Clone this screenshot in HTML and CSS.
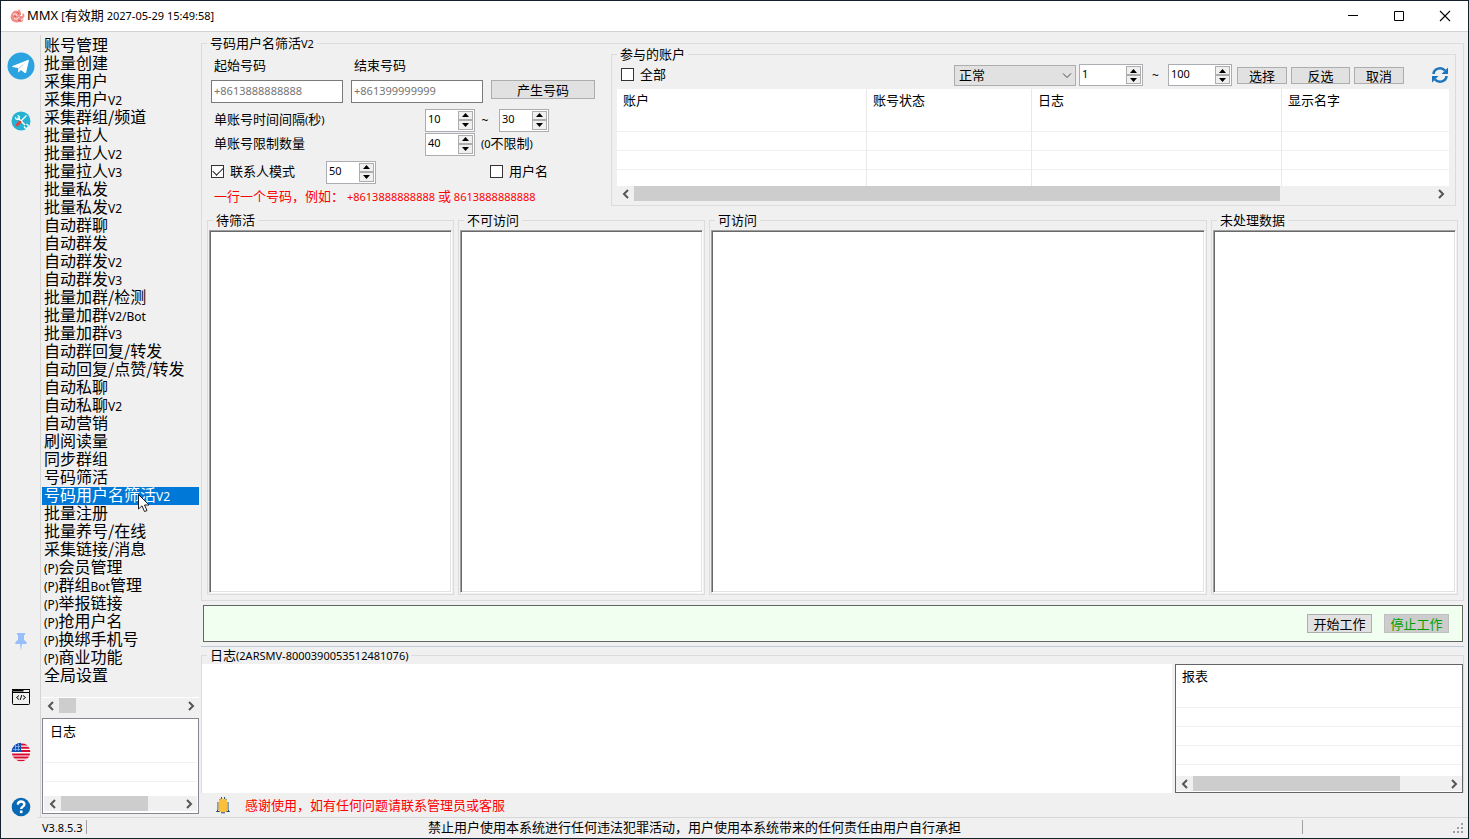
FILE: index.html
```html
<!DOCTYPE html>
<html lang="zh-CN">
<head>
<meta charset="utf-8">
<title>MMX</title>
<link rel="stylesheet" href="styles.css">
</head>
<body>
<div class="window">
  <header class="titlebar">
    <svg class="logo" width="16" height="16" viewBox="0 0 16 16"><path d="M2 5C4 2 6 2 8 3C8 1 10 1 10 3C12 5 11 7 10 8L12 8C13 7 12 6 13 5C15 7 15 9 13 10C14 12 13 14 10 14C6 15 2 14 1 11C0 9 1 7 2 5Z" fill="#f08f8a"/><path d="M3 7C5 5 7 6 7 8M4 10C6 12 8 11 9 9M11 12l2-1M11 4l2-1" fill="none" stroke="#fff" stroke-width="1"/><path d="M4 8L6 9M7 4L9 6M8 12L11 13" stroke="#d8524f" stroke-width="1"/></svg>
    <h1 class="title"><span class="brand">MMX</span> <span class="latin">[</span>有效期 <span class="latin">2027-05-29 15:49:58]</span></h1>
    <div class="winbtns">
      <button class="winbtn" aria-label="最小化"><svg width="12" height="12"><path d="M1 5.500h10" stroke="#000"/></svg></button>
      <button class="winbtn" aria-label="最大化"><svg width="12" height="12"><path d="M1.500 1.500h9v9h-9z" fill="none" stroke="#000"/></svg></button>
      <button class="winbtn" aria-label="关闭"><svg width="12" height="12"><path d="M1 1L11 11M11 1L1 11" stroke="#000" stroke-width="1.100"/></svg></button>
    </div>
  </header>

  <div class="app">
    <nav class="rail" aria-label="工具">
      <button class="railbtn" aria-label="Telegram"><svg width="28" height="28" viewBox="0 0 28 28"><circle cx="14" cy="14" r="13.500" fill="#2ba3e0"/><path d="M5.500 14L20.800 7.900C21.500 7.700 22 8.100 21.800 9L19.200 20.300C19 21.100 18.500 21.300 17.800 20.900L13.900 18L12 19.900C11.600 20.300 11.100 20.200 11.100 19.500V16L5.600 14.900C5 14.700 5 14.200 5.500 14Z" fill="#fff"/><path d="M11.100 16L18.500 10.600L12.500 16.800L12 19.900Z" fill="#c8daea"/></svg></button>
      <button class="railbtn" aria-label="工具箱"><svg width="20" height="20" viewBox="0 0 20 20"><circle cx="10" cy="10" r="9.500" fill="#25b2d2"/><path d="M6.500 6.500L14 14" stroke="#fff" stroke-width="1.600"/><path d="M4.500 6A2 2 0 1 0 6.500 4.500M13.300 15.300A2 2 0 1 0 15.300 13.300" fill="none" stroke="#fff" stroke-width="1.200"/><path d="M15.500 4.500L10 10" stroke="#fff" stroke-width="1.200"/><path d="M9 11L6 14" stroke="#e4413c" stroke-width="2.800" stroke-linecap="round"/></svg></button>
      <span class="spring"></span>
      <button class="railbtn" aria-label="固定"><svg width="14" height="20" viewBox="0 0 14 20"><path d="M3 1H11V3H10V8C12 9 12.800 10 12.800 12H8L7 19L6 12H1.200C1.200 10 2 9 4 8V3H3Z" fill="#99bffb"/></svg></button>
      <button class="railbtn" aria-label="代码"><svg width="20" height="18" viewBox="0 0 20 18"><rect x="1.500" y="1.500" width="17" height="15" rx="1" fill="none" stroke="#000"/><path d="M1 1.500H19M1 4.500H19" stroke="#000"/><path d="M2 2.500H12.500" stroke="#000" stroke-width="2"/><path d="M8 7.500L5.500 9.500L8 11.500M12 7.500L14.500 9.500L12 11.500M10.800 7L9.200 12" fill="none" stroke="#000"/></svg></button>
      <button class="railbtn" aria-label="语言"><svg width="20" height="20" viewBox="0 0 20 20"><clipPath id="round"><circle cx="10" cy="10" r="9.300"/></clipPath><g clip-path="url(#round)"><path d="M0 0H20V20H0Z" fill="#fff"/><path d="M0 2.500H20M0 5.800H20M0 9H20M0 12.500H20M0 15.500H20M0 18.800H20" stroke="#d80b2e" stroke-width="2"/><path d="M0 0H10V10H0Z" fill="#0d52b5"/><path d="M2 7.500h7M4 4.500h5M4.500 3v6M7.500 2v7" stroke="#9fc0ea" stroke-width=".7"/></g></svg></button>
      <button class="railbtn" aria-label="帮助"><svg width="20" height="20" viewBox="0 0 20 20"><circle cx="10" cy="10" r="9.300" fill="#0768b3"/><path d="M6.800 7.600C7 5.400 8.300 4.500 10.100 4.500C12 4.500 13.400 5.500 13.400 7.200C13.400 9.600 10.200 9.600 10.200 12" fill="none" stroke="#fff" stroke-width="2.400"/><rect x="8.900" y="13.500" width="2.600" height="2.600" fill="#fff"/></svg></button>
    </nav>

    <aside class="side">
      <ul class="menu">
        <li><a href="#">账号管理</a></li>
        <li><a href="#">批量创建</a></li>
        <li><a href="#">采集用户</a></li>
        <li><a href="#">采集用户<small>V2</small></a></li>
        <li><a href="#">采集群组/频道</a></li>
        <li><a href="#">批量拉人</a></li>
        <li><a href="#">批量拉人<small>V2</small></a></li>
        <li><a href="#">批量拉人<small>V3</small></a></li>
        <li><a href="#">批量私发</a></li>
        <li><a href="#">批量私发<small>V2</small></a></li>
        <li><a href="#">自动群聊</a></li>
        <li><a href="#">自动群发</a></li>
        <li><a href="#">自动群发<small>V2</small></a></li>
        <li><a href="#">自动群发<small>V3</small></a></li>
        <li><a href="#">批量加群/检测</a></li>
        <li><a href="#">批量加群<small>V2/Bot</small></a></li>
        <li><a href="#">批量加群<small>V3</small></a></li>
        <li><a href="#">自动群回复/转发</a></li>
        <li><a href="#">自动回复/点赞/转发</a></li>
        <li><a href="#">自动私聊</a></li>
        <li><a href="#">自动私聊<small>V2</small></a></li>
        <li><a href="#">自动营销</a></li>
        <li><a href="#">刷阅读量</a></li>
        <li><a href="#">同步群组</a></li>
        <li><a href="#">号码筛活</a></li>
        <li class="current"><a href="#" aria-current="page">号码用户名筛活<small>V2</small></a><svg class="pointer" width="14" height="21" viewBox="0 0 14 21"><path d="M1.500 1.500V16L5 12.800L7.500 18.600L10 17.500L7.500 12H12Z" fill="#fff" stroke="#1b1b2a"/></svg></li>
        <li><a href="#">批量注册</a></li>
        <li><a href="#">批量养号/在线</a></li>
        <li><a href="#">采集链接/消息</a></li>
        <li><a href="#"><small>(P)</small>会员管理</a></li>
        <li><a href="#"><small>(P)</small>群组<small>Bot</small>管理</a></li>
        <li><a href="#"><small>(P)</small>举报链接</a></li>
        <li><a href="#"><small>(P)</small>抢用户名</a></li>
        <li><a href="#"><small>(P)</small>换绑手机号</a></li>
        <li><a href="#"><small>(P)</small>商业功能</a></li>
        <li><a href="#">全局设置</a></li>
      </ul>
      <div class="scroll menuscroll">
        <button aria-label="向左"><svg width="8" height="10"><path d="M6 1L2 5L6 9"/></svg></button>
        <div class="track"><div class="thumb" style="width:14%"></div></div>
        <button aria-label="向右"><svg width="8" height="10"><path d="M2 1L6 5L2 9"/></svg></button>
      </div>
      <div class="listview sidelog">
        <table>
          <thead><tr><th>日志</th></tr></thead>
          <tbody><tr><td></td></tr><tr><td></td></tr></tbody>
        </table>
        <div class="scroll">
          <button aria-label="向左"><svg width="8" height="10"><path d="M6 1L2 5L6 9"/></svg></button>
          <div class="track"><div class="thumb" style="width:73%"></div></div>
          <button aria-label="向右"><svg width="8" height="10"><path d="M2 1L6 5L2 9"/></svg></button>
        </div>
      </div>
    </aside>

    <main class="main">
      <fieldset class="group outer">
        <legend>号码用户名筛活<span class="latin">V2</span></legend>
        <div class="top">
          <form class="settings">
            <div class="numbers">
              <label for="from">起始号码</label>
              <label for="to">结束号码</label>
              <span></span>
              <input class="text" id="from" type="text" placeholder="+8613888888888">
              <input class="text" id="to" type="text" placeholder="+861399999999">
              <button class="btn" type="button">产生号码</button>
            </div>
            <div class="line">
              <label class="wide" for="gapmin">单账号时间间隔<span class="latin">(</span>秒<span class="latin">)</span></label>
              <span class="spin"><input id="gapmin" type="text" value="10"><span class="steps"><button type="button" aria-label="增加"><svg width="7" height="4"><path d="M0 4L3.500 0L7 4Z"/></svg></button><button type="button" aria-label="减少"><svg width="7" height="4"><path d="M0 0L3.500 4L7 0Z"/></svg></button></span></span>
              <span class="tilde">~</span>
              <span class="spin"><input aria-label="最大间隔" type="text" value="30"><span class="steps"><button type="button" aria-label="增加"><svg width="7" height="4"><path d="M0 4L3.500 0L7 4Z"/></svg></button><button type="button" aria-label="减少"><svg width="7" height="4"><path d="M0 0L3.500 4L7 0Z"/></svg></button></span></span>
            </div>
            <div class="line">
              <label class="wide" for="limit">单账号限制数量</label>
              <span class="spin"><input id="limit" type="text" value="40"><span class="steps"><button type="button" aria-label="增加"><svg width="7" height="4"><path d="M0 4L3.500 0L7 4Z"/></svg></button><button type="button" aria-label="减少"><svg width="7" height="4"><path d="M0 0L3.500 4L7 0Z"/></svg></button></span></span>
              <span class="hint"><span class="latin">(0</span>不限制<span class="latin">)</span></span>
            </div>
            <div class="line modes">
              <label class="check contact"><input type="checkbox" checked>联系人模式</label>
              <span class="spin"><input aria-label="联系人数量" type="text" value="50"><span class="steps"><button type="button" aria-label="增加"><svg width="7" height="4"><path d="M0 4L3.500 0L7 4Z"/></svg></button><button type="button" aria-label="减少"><svg width="7" height="4"><path d="M0 0L3.500 4L7 0Z"/></svg></button></span></span>
              <label class="check username"><input type="checkbox">用户名</label>
            </div>
            <p class="note">一行一个号码，例如： <span class="latin">+8613888888888</span> 或 <span class="latin">8613888888888</span></p>
          </form>

          <fieldset class="group accounts">
            <legend>参与的账户</legend>
            <div class="tools">
              <label class="check all"><input type="checkbox">全部</label>
              <span class="pick"><select aria-label="状态"><option>正常</option></select><svg width="10" height="6"><path d="M1 .5L5 4.500L9 .5" fill="none" stroke="#444"/></svg></span>
              <span class="spin big"><input aria-label="起始" type="text" value="1"><span class="steps"><button type="button" aria-label="增加"><svg width="7" height="4"><path d="M0 4L3.500 0L7 4Z"/></svg></button><button type="button" aria-label="减少"><svg width="7" height="4"><path d="M0 0L3.500 4L7 0Z"/></svg></button></span></span>
              <span class="tilde range">~</span>
              <span class="spin big"><input aria-label="结束" type="text" value="100"><span class="steps"><button type="button" aria-label="增加"><svg width="7" height="4"><path d="M0 4L3.500 0L7 4Z"/></svg></button><button type="button" aria-label="减少"><svg width="7" height="4"><path d="M0 0L3.500 4L7 0Z"/></svg></button></span></span>
              <span class="actions"><button class="btn small" type="button">选择</button><button class="btn medium" type="button">反选</button><button class="btn small" type="button">取消</button></span>
              <button class="refresh" type="button" aria-label="刷新"><svg width="18" height="18" viewBox="0 0 18 18"><path d="M2.500 8A6.500 6 0 0 1 14 4.500M15.500 10A6.500 6 0 0 1 4 13.500" fill="none" stroke="#1c75bc" stroke-width="2.600"/><path d="M17 1.500V8H10.500ZM1 16.500V10H7.500Z" fill="#1c75bc"/></svg></button>
            </div>
            <div class="listview">
              <table class="cols">
                <colgroup><col class="c-account"><col class="c-status"><col class="c-log"><col></colgroup>
                <thead><tr><th>账户</th><th>账号状态</th><th>日志</th><th>显示名字</th></tr></thead>
                <tbody>
                  <tr><td></td><td></td><td></td><td></td></tr>
                  <tr><td></td><td></td><td></td><td></td></tr>
                  <tr><td></td><td></td><td></td><td></td></tr>
                  <tr class="cut"><td></td><td></td><td></td><td></td></tr>
                </tbody>
              </table>
              <div class="scroll">
                <button type="button" aria-label="向左"><svg width="8" height="10"><path d="M6 1L2 5L6 9"/></svg></button>
                <div class="track"><div class="thumb" style="width:81%"></div></div>
                <button type="button" aria-label="向右"><svg width="8" height="10"><path d="M2 1L6 5L2 9"/></svg></button>
              </div>
            </div>
          </fieldset>
        </div>

        <div class="results">
          <fieldset class="group"><legend>待筛活</legend><textarea class="sunken" aria-label="待筛活"></textarea></fieldset>
          <fieldset class="group"><legend>不可访问</legend><textarea class="sunken" aria-label="不可访问"></textarea></fieldset>
          <fieldset class="group grow"><legend>可访问</legend><textarea class="sunken" aria-label="可访问"></textarea></fieldset>
          <fieldset class="group"><legend>未处理数据</legend><textarea class="sunken" aria-label="未处理数据"></textarea></fieldset>
        </div>
      </fieldset>

      <div class="workbar">
        <button class="btn" type="button">开始工作</button>
        <button class="btn stop" type="button">停止工作</button>
      </div>

      <section class="bottom">
        <fieldset class="group logs">
          <legend>日志<span class="latin">(2ARSMV-8000390053512481076)</span></legend>
          <div class="logrow">
            <textarea class="log" aria-label="日志"></textarea>
            <div class="listview report">
              <table>
                <thead><tr><th>报表</th></tr></thead>
                <tbody><tr><td></td></tr><tr><td></td></tr><tr><td></td></tr><tr><td></td></tr></tbody>
              </table>
              <div class="scroll">
                <button type="button" aria-label="向左"><svg width="8" height="10"><path d="M6 1L2 5L6 9"/></svg></button>
                <div class="track"><div class="thumb" style="width:82%"></div></div>
                <button type="button" aria-label="向右"><svg width="8" height="10"><path d="M2 1L6 5L2 9"/></svg></button>
              </div>
            </div>
          </div>
        </fieldset>
        <div class="notice">
          <svg width="15" height="18" viewBox="0 0 15 18"><path d="M5.500 3V1M8.500 3V1M3.500 4L5 2.500M10.500 4L9 2.500M2 6V14L.5 15.500H4M12 6V14L13.500 15.500H10M5 16.800H9" fill="none" stroke="#174a7c"/><path d="M2.500 14.500V7C2.500 4 4.500 2.500 7 2.500S11.500 4 11.500 7V14.500L10 16H4Z" fill="#fcbf3b"/></svg>
          <span>感谢使用，如有任何问题请联系管理员或客服</span>
        </div>
      </section>
    </main>
  </div>

  <footer class="status">
    <span class="version latin">V3.8.5.3</span>
    <span class="legal">禁止用户使用本系统进行任何违法犯罪活动，用户使用本系统带来的任何责任由用户自行承担</span>
    <span class="tail"><svg width="12" height="12"><path d="M9 1h2v2h-2zM5 5h2v2h-2zM9 5h2v2h-2zM1 9h2v2h-2zM5 9h2v2h-2zM9 9h2v2h-2z" fill="#a0a0a0"/></svg></span>
  </footer>
</div>
</body>
</html>
```

FILE: styles.css
```css
* { box-sizing: border-box; }

body {
  margin: 0;
  background: #f0f0f0;
  color: #000;
  font: 13px/17px "Noto Sans CJK SC", sans-serif;
}

button, input, select, textarea {
  margin: 0;
  padding: 0;
  font: inherit;
  color: inherit;
}

button { border: 0; background: none; }

.latin {
  font-family: "Noto Sans", sans-serif;
  font-size: 11px;
  line-height: 11px;
}

.window {
  display: flex;
  flex-direction: column;
  min-height: 100vh;
  border: 1px solid #14202e;
}

/* title bar */
.titlebar {
  display: flex;
  align-items: center;
  height: 31px;
  padding-left: 9px;
  background: #fff;
  border-bottom: 1px solid #d2d2d2;
}

.title {
  flex: 1;
  margin: 0 0 0 1px;
  padding-bottom: 2px;
  font-size: 13px;
  font-weight: 400;
  line-height: 17px;
}

.brand { font-family: "Noto Sans", sans-serif; }
.winbtns { display: flex; }

.winbtn {
  display: grid;
  place-items: center;
  width: 46px;
  height: 28px;
}

/* icon rail */
.app { display: flex; flex: 1; }

.rail {
  display: flex;
  flex-direction: column;
  align-items: center;
  width: 40px;
  margin-top: 3px;
  padding-top: 11px;
  border-right: 1px solid #d5d5d5;
}

.railbtn {
  display: grid;
  place-items: center;
  width: 39px;
  height: 40px;
}

.railbtn + .railbtn { margin-top: 15px; }
.rail .railbtn:last-child { height: 20px; margin-top: 25px; }
.spring { flex: 1; }

/* sidebar */
.side {
  display: flex;
  flex-direction: column;
  width: 160px;
  padding: 5px 2px 3px 1px;
}

.menu {
  flex: 1;
  margin: 0;
  padding: 0;
  list-style: none;
  font-size: 16px;
  line-height: 14px;
}

.menu li { position: relative; height: 18px; padding-left: 2px; }
.menu a { display: block; color: inherit; text-decoration: none; white-space: nowrap; }
.menu small { font: 12px/12px "Noto Sans", sans-serif; }
.menu .current { background: #0078d7; color: #fff; }
.pointer { position: absolute; left: 95px; top: 6px; z-index: 1; }

/* horizontal scroll bars */
.scroll { display: flex; height: 15px; background: #f0f0f0; }
.scroll button { display: grid; place-items: center; width: 17px; }
.scroll path { fill: none; stroke: #555; stroke-width: 2; }
.menuscroll { height: 16px; border-top: 1px solid #fff; }
.track { flex: 1; display: flex; }
.thumb { background: #cdcdcd; }

/* list views */
.listview { display: flex; flex-direction: column; background: #fff; }
.listview .scroll { margin-top: auto; }

table {
  width: 100%;
  border-collapse: separate;
  border-spacing: 0;
  table-layout: fixed;
}

th {
  height: 24px;
  padding: 0 0 3px 6px;
  text-align: left;
  font-weight: 400;
}

td { height: 19px; padding: 0; border-bottom: 1px solid #f0f0f0; }
.cols th, .cols td { border-right: 1px solid #e8e8e8; }
.cols th:last-child, .cols td:last-child { border-right: 0; }
.cut td { height: 16px; border-bottom: 0; }
.c-account, .c-log { width: 250px; }
.c-status { width: 165px; }

.sidelog {
  height: 96px;
  margin-top: 5px;
  padding: 1px;
  border: 1px solid #828790;
}

.sidelog .scroll, .report .scroll { margin-bottom: 1px; }

/* group boxes */
.main {
  display: flex;
  flex: 1;
  flex-direction: column;
  min-width: 0;
  padding: 3px 4px 0 0;
}

.group {
  min-width: 0;
  margin: 0;
  padding: 0;
  border: 1px solid #dcdcdc;
}

.group > legend { margin-left: 5px; padding: 0 3px 2px; line-height: 15px; }

.outer { display: flex; flex: 1; flex-direction: column; padding: 0 5px 5px; }
.outer > legend { margin-left: 0; }
.top { display: flex; margin-top: -6px; }

/* settings form */
.settings { width: 400px; margin-right: 4px; padding: 10px 0 0 4px; }

.numbers {
  display: grid;
  grid-template-columns: 132px 132px 104px;
  column-gap: 8px;
  row-gap: 7px;
}

.numbers label, .wide { padding-left: 3px; }

.text {
  height: 23px;
  min-width: 0;
  padding: 0 2px 2px;
  border: 1px solid #7a7a7a;
  background: #fff;
  font: 11px "Noto Sans", sans-serif;
}

.text::placeholder { color: #757575; }

.btn {
  height: 19px;
  border: 1px solid #adadad;
  background: #e1e1e1;
  line-height: 17px;
}

.line { display: flex; height: 24px; align-items: center; }
.numbers + .line { margin-top: 5px; }
.wide { width: 214px; padding-bottom: 4px; }
.modes { margin-top: 4px; }
.contact { width: 115px; }
.username { margin-left: 114px; }
.hint { margin-left: 6px; padding-bottom: 4px; }
.note { margin: 3px 0 0 3px; color: #f00; white-space: nowrap; }

.tilde { width: 24px; padding-right: 4px; text-align: center; font: 12px "Noto Sans", sans-serif; }

.check { display: flex; align-items: center; gap: 6px; padding-bottom: 3px; }

.check input {
  appearance: none;
  display: grid;
  place-items: center;
  width: 13px;
  height: 13px;
  margin-top: 1px;
  border: 1px solid #333;
  background: #fff;
}

.check input:checked::before {
  content: "";
  width: 9px;
  height: 5px;
  margin-top: -3px;
  border: solid #222;
  border-width: 0 0 1px 1px;
  transform: rotate(-45deg);
}

.spin {
  display: flex;
  width: 50px;
  height: 23px;
  padding: 1px;
  border: 1px solid #abadb3;
  background: #fff;
}

.spin input {
  flex: 1;
  width: 0;
  padding: 0 0 3px 1px;
  border: 0;
  background: none;
  font: 11px "Noto Sans", sans-serif;
}

.steps { display: flex; flex-direction: column; width: 15px; }

.steps button {
  display: grid;
  place-items: center;
  flex: 1;
  min-height: 0;
  border: 1px solid #adadad;
  background: #f0f0f0;
}

.big { width: 64px; height: 22px; }

/* accounts */
.accounts { flex: 1; height: 160px; margin-right: 2px; padding: 0 6px 4px 5px; }
.accounts > legend { margin-left: 0; }
.tools { display: flex; align-items: center; height: 26px; padding: 0 0 2px 4px; }
.all { margin-right: auto; }
.pick { display: flex; position: relative; margin-right: 3px; }

.pick select {
  appearance: none;
  width: 122px;
  height: 21px;
  padding: 0 0 1px 4px;
  border: 1px solid #adadad;
  border-radius: 0;
  background: #e1e1e1;
}

.pick svg { position: absolute; right: 4px; top: 8px; pointer-events: none; }
.range { width: 25px; padding: 0; }
.actions { display: flex; gap: 4px; margin: 0 27px 0 5px; }
.small { width: 50px; height: 17px; line-height: 15px; }
.medium { width: 59px; height: 17px; line-height: 15px; }
.refresh { display: grid; }

/* results */
.results { display: flex; flex: 1; gap: 4px; margin-top: 6px; }

.results .group {
  display: flex;
  flex-direction: column;
  width: 247px;
  padding: 1px;
}

.results .group > legend { margin-left: 4px; }
.results .grow { flex: 1; }

.sunken {
  flex: 1;
  width: 100%;
  border: 1px solid #a0a0a0;
  border-right-color: #fff;
  border-bottom-color: #fff;
  background: #fff;
  box-shadow: inset 1px 1px #696969, inset -1px -1px #e3e3e3;
  resize: none;
}

/* work bar */
.workbar {
  display: flex;
  align-items: center;
  justify-content: flex-end;
  gap: 12px;
  height: 37px;
  margin: 4px 1px 4px 2px;
  padding-right: 13px;
  border: 1px solid #646464;
  background: #f0fff0;
}

.workbar .btn { width: 65px; }
.workbar .stop { border-color: #bfbfbf; background: #ccc; color: #00a000; }

/* log area */
.bottom { border-top: 1px solid #bcccdc; }
.logs { border-bottom: 0; }
.logrow { display: flex; gap: 3px; height: 129px; }
.log { flex: 1; border: 0; background: #fff; resize: none; }
.report { width: 288px; border: 1px solid #646464; }

.notice {
  display: flex;
  align-items: center;
  gap: 14px;
  height: 24px;
  padding-left: 15px;
  color: #f00;
}

.notice span { padding-bottom: 2px; }

/* status bar */
.status {
  display: flex;
  height: 21px;
  margin-left: 37px;
  border-top: 1px solid #d7d7d7;
  line-height: 18px;
}

.version { width: 49px; height: 14px; margin-top: 2px; padding-left: 4px; border-right: 1px solid #a0a0a0; line-height: 15px; }
.legal { flex: 1; text-align: center; }

.tail {
  display: flex;
  align-items: flex-end;
  justify-content: flex-end;
  width: 166px;
  height: 14px;
  margin-top: 2px;
  padding-right: 4px;
  border-left: 1px solid #a0a0a0;
}
```
